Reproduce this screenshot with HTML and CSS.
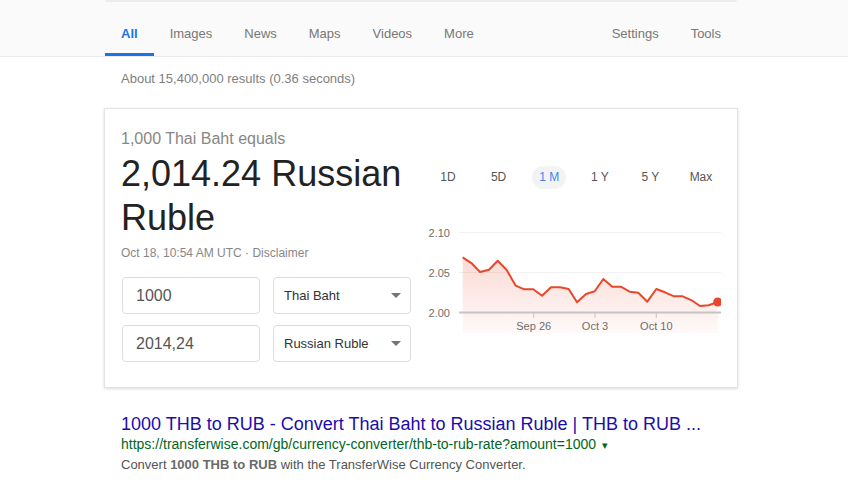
FILE: index.html
```html
<!DOCTYPE html>
<html lang="en">
    <head>
        <meta charset="UTF-8">
        <title>1000 THB to RUB - Search</title>
        <link rel="stylesheet" href="styles.css">
    </head>
    <body>
        <!-- Top bar with the search tabs -->
        <div id="header">
            <div class="page">
                <div class="search-edge"></div>
                <div class="tabs">
                    <div class="tab active">All</div>
                    <div class="tab">Images</div>
                    <div class="tab">News</div>
                    <div class="tab">Maps</div>
                    <div class="tab">Videos</div>
                    <div class="tab">More</div>
                    <div class="spacer"></div>
                    <div class="tab">Settings</div>
                    <div class="tab">Tools</div>
                </div>
            </div>
        </div>

        <div class="page">
            <div id="result-stats">About 15,400,000 results (0.36 seconds)</div>

            <!-- Currency converter card -->
            <div id="converter">
                <div class="conv-left">
                    <div class="conv-from">1,000 Thai Baht equals</div>
                    <div class="conv-to">2,014.24 Russian Ruble</div>
                    <div class="conv-date">Oct 18, 10:54 AM UTC · Disclaimer</div>
                    <div class="conv-form">
                        <div class="conv-input">1000</div>
                        <div class="conv-select">Thai Baht<span class="arrow"></span></div>
                        <div class="conv-input">2014,24</div>
                        <div class="conv-select">Russian Ruble<span class="arrow"></span></div>
                    </div>
                </div>
                <div class="conv-right">
                    <div class="ranges">
                        <span class="range">1D</span>
                        <span class="range">5D</span>
                        <span class="range active">1 M</span>
                        <span class="range">1 Y</span>
                        <span class="range">5 Y</span>
                        <span class="range">Max</span>
                    </div>
                    <svg class="chart" width="296" height="116" viewBox="0 0 296 116">
                        <defs>
                            <linearGradient id="fade" x1="0" y1="0" x2="0" y2="1">
                                <stop offset="0" stop-color="#e8472b" stop-opacity="0.2"/>
                                <stop offset="1" stop-color="#e8472b" stop-opacity="0.03"/>
                            </linearGradient>
                        </defs>
                        <line x1="34" y1="12.5" x2="296" y2="12.5" stroke="#f1f1f1"/>
                        <line x1="34" y1="52.5" x2="296" y2="52.5" stroke="#f1f1f1"/>
                        <text x="25" y="17" class="axis" text-anchor="end">2.10</text>
                        <text x="25" y="57" class="axis" text-anchor="end">2.05</text>
                        <text x="25" y="97" class="axis" text-anchor="end">2.00</text>
                        <path id="area" fill="url(#fade)" d=""/>
                        <line x1="34" y1="92.5" x2="296" y2="92.5" stroke="#c4c4c4" stroke-width="2"/>
                        <line x1="108.7" y1="93" x2="108.7" y2="98" stroke="#c4c4c4"/>
                        <line x1="170" y1="93" x2="170" y2="98" stroke="#c4c4c4"/>
                        <line x1="231.3" y1="93" x2="231.3" y2="98" stroke="#c4c4c4"/>
                        <text x="108.7" y="110" class="axis" text-anchor="middle">Sep 26</text>
                        <text x="170" y="110" class="axis" text-anchor="middle">Oct 3</text>
                        <text x="231.3" y="110" class="axis" text-anchor="middle">Oct 10</text>
                        <path id="line" fill="none" stroke="#e8472b" stroke-width="2" stroke-linejoin="round" d=""/>
                        <circle cx="292.7" cy="82" r="4.5" fill="#e8472b"/>
                    </svg>
                </div>
            </div>

            <!-- First search result -->
            <div class="result">
                <a class="result-title" href="#">1000 THB to RUB - Convert Thai Baht to Russian Ruble | THB to RUB ...</a>
                <div class="result-url">https://transferwise.com/gb/currency-converter/thb-to-rub-rate?amount=1000 <span class="url-arrow">▾</span></div>
                <div class="result-snippet">Convert <b>1000 THB to RUB</b> with the TransferWise Currency Converter.</div>
            </div>
        </div>

        <script type="text/javascript">
            // Rate points for the last month, already in chart coordinates
            const points = [
                [37.7, 37.3], [46.7, 43.3], [55, 52], [64, 49.7], [72.7, 40.7], [81.7, 50],
                [90.7, 65.7], [99.3, 69.3], [108.3, 69.3], [117, 75.7], [126, 67.3], [135, 67.3],
                [143.7, 69], [152, 82.3], [161, 74], [169.7, 71.3], [178.3, 59], [187.3, 66.7],
                [195.7, 66.7], [204.7, 71.7], [213.3, 72.7], [222.3, 81.7], [231.3, 69], [240, 72.3],
                [249, 76.3], [257.7, 76.3], [266.7, 80.3], [275, 86], [283.7, 85.3], [292.7, 82]
            ];

            var d = "";
            for (var i = 0; i < points.length; i++) {
                d += (i == 0 ? "M" : "L") + points[i][0] + " " + points[i][1] + " ";
            }
            document.getElementById('line').setAttribute('d', d);
            document.getElementById('area').setAttribute('d', d + "L292.7 113 L37.7 113 Z");
        </script>
    </body>
</html>
```

FILE: styles.css
```css
* {
    margin: 0;
    padding: 0;
    box-sizing: border-box;
}

body {
    font: 13px Arial, "Liberation Sans", sans-serif;
    color: #222;
    background-color: white;
}

.page {
    width: 632px;
    margin-left: 105px;
}

#header {
    height: 57px;
    border-bottom: 1px solid #ebebeb;
    background-color: #fafafa;
}

.search-edge {
    height: 2px;
    border-radius: 0 0 2px 2px;
    background-color: #ececec;
}

.tabs {
    display: flex;
}

.tab {
    padding: 24px 16px 11px 16px;
    line-height: 16px;
    color: #777;
    border-bottom: 3px solid transparent;
}

.tab.active {
    font-weight: bold;
    color: #1a73e8;
    border-bottom-color: #1a73e8;
}

.spacer {
    flex: 1;
}

#result-stats {
    margin-top: 14px;
    padding-left: 16px;
    line-height: 16px;
    color: #808080;
}

#converter {
    display: flex;
    margin-top: 21px;
    margin-left: -1px;
    width: 634px;
    padding: 20px 16px 25px 16px;
    border: 1px solid #e3e3e3;
    box-shadow: 0 1px 3px rgba(0, 0, 0, 0.14);
}

.conv-left {
    width: 291px;
}

.conv-from {
    font-size: 16px;
    line-height: 20px;
    color: #878787;
}

.conv-to {
    margin-top: 3px;
    font-size: 36px;
    line-height: 44px;
    color: #222;
}

.conv-date {
    margin-top: 5px;
    font-size: 12px;
    line-height: 16px;
    color: #878787;
}

.conv-form {
    display: grid;
    grid-template-columns: 138px 138px;
    column-gap: 13px;
    row-gap: 11px;
    margin-top: 16px;
    margin-left: 1px;
}

.conv-input, .conv-select {
    position: relative;
    height: 37px;
    border: 1px solid #dadce0;
    border-radius: 4px;
}

.conv-input {
    padding-left: 13px;
    font-size: 16px;
    line-height: 35px;
    color: #555;
}

.conv-select {
    padding-left: 10px;
    font-size: 13px;
    line-height: 35px;
    color: #333;
}

.arrow {
    position: absolute;
    top: 15px;
    right: 9px;
    border-top: 5px solid #757575;
    border-left: 5px solid transparent;
    border-right: 5px solid transparent;
}

.conv-right {
    flex: 1;
    margin-left: 13px;
}

.ranges {
    display: flex;
    justify-content: space-between;
    margin-top: 37px;
    padding: 0 3px 0 6px;
}

.range {
    width: 34px;
    height: 23px;
    line-height: 23px;
    border-radius: 12px;
    text-align: center;
    font-size: 12px;
    color: #555;
}

.range.active {
    color: #4285f4;
    background-color: #f1f3f4;
}

.chart {
    display: block;
    margin-top: 31px;
}

.axis {
    font: 11px Arial, "Liberation Sans", sans-serif;
    fill: #6d6d6d;
}

.result {
    margin-top: 25px;
    padding-left: 16px;
}

.result-title {
    display: block;
    font-size: 18px;
    line-height: 22px;
    color: #1a0dab;
    text-decoration: none;
}

.result-url {
    font-size: 14px;
    line-height: 18px;
    color: #006621;
}

.url-arrow {
    font-size: 11px;
    margin-left: 2px;
}

.result-snippet {
    margin-top: 2px;
    line-height: 18px;
    color: #545454;
}

.result-snippet b {
    color: #6a6a6a;
}
```
